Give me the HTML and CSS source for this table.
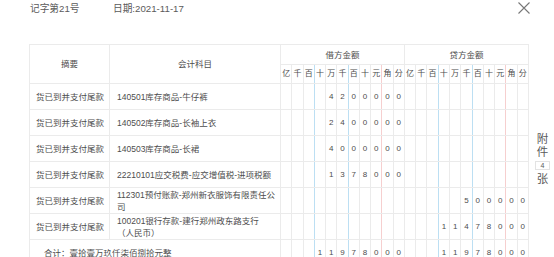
FILE: index.html
```html
<!DOCTYPE html>
<html lang="zh">
<head>
<meta charset="utf-8">
<title>记账凭证</title>
<link rel="stylesheet" href="styles.css">
</head>
<body>
<div class="top">
  <span class="no">记字第21号</span>
  <span class="date">日期:2021-11-17</span>
  <svg class="close" viewBox="0 0 12 12" width="12" height="12"><path d="M0.5 0.5L11.5 11.5M11.5 0.5L0.5 11.5" stroke="#777" stroke-width="1.1" fill="none"/></svg>
</div>
<div class="main">
<table class="voucher">
  <colgroup><col class="c1"><col class="c2"></colgroup>
  <thead>
    <tr class="h1">
      <th rowspan="2">摘要</th>
      <th rowspan="2">会计科目</th>
      <th colspan="11">借方金额</th>
      <th colspan="11">贷方金额</th>
    </tr>
    <tr class="h2">
      <th class="d">亿</th><th class="d">千</th><th class="d b">百</th><th class="d">十</th><th class="d">万</th><th class="d b">千</th><th class="d">百</th><th class="d">十</th><th class="d r">元</th><th class="d">角</th><th class="d">分</th>
      <th class="d">亿</th><th class="d">千</th><th class="d b">百</th><th class="d">十</th><th class="d">万</th><th class="d b">千</th><th class="d">百</th><th class="d">十</th><th class="d r">元</th><th class="d">角</th><th class="d">分</th>
    </tr>
  </thead>
  <tbody>
    <tr class="row">
      <td class="sum">货已到并支付尾款</td>
      <td class="subj">140501库存商品-牛仔裤</td>
      <td class="d"></td><td class="d"></td><td class="d b"></td><td class="d"></td><td class="d">4</td><td class="d b">2</td><td class="d">0</td><td class="d">0</td><td class="d r">0</td><td class="d">0</td><td class="d">0</td>
      <td class="d"></td><td class="d"></td><td class="d b"></td><td class="d"></td><td class="d"></td><td class="d b"></td><td class="d"></td><td class="d"></td><td class="d r"></td><td class="d"></td><td class="d"></td>
    </tr>
    <tr class="row">
      <td class="sum">货已到并支付尾款</td>
      <td class="subj">140502库存商品-长袖上衣</td>
      <td class="d"></td><td class="d"></td><td class="d b"></td><td class="d"></td><td class="d">2</td><td class="d b">4</td><td class="d">0</td><td class="d">0</td><td class="d r">0</td><td class="d">0</td><td class="d">0</td>
      <td class="d"></td><td class="d"></td><td class="d b"></td><td class="d"></td><td class="d"></td><td class="d b"></td><td class="d"></td><td class="d"></td><td class="d r"></td><td class="d"></td><td class="d"></td>
    </tr>
    <tr class="row">
      <td class="sum">货已到并支付尾款</td>
      <td class="subj">140503库存商品-长裙</td>
      <td class="d"></td><td class="d"></td><td class="d b"></td><td class="d"></td><td class="d">4</td><td class="d b">0</td><td class="d">0</td><td class="d">0</td><td class="d r">0</td><td class="d">0</td><td class="d">0</td>
      <td class="d"></td><td class="d"></td><td class="d b"></td><td class="d"></td><td class="d"></td><td class="d b"></td><td class="d"></td><td class="d"></td><td class="d r"></td><td class="d"></td><td class="d"></td>
    </tr>
    <tr class="row">
      <td class="sum">货已到并支付尾款</td>
      <td class="subj">22210101应交税费-应交增值税-进项税额</td>
      <td class="d"></td><td class="d"></td><td class="d b"></td><td class="d"></td><td class="d">1</td><td class="d b">3</td><td class="d">7</td><td class="d">8</td><td class="d r">0</td><td class="d">0</td><td class="d">0</td>
      <td class="d"></td><td class="d"></td><td class="d b"></td><td class="d"></td><td class="d"></td><td class="d b"></td><td class="d"></td><td class="d"></td><td class="d r"></td><td class="d"></td><td class="d"></td>
    </tr>
    <tr class="row">
      <td class="sum">货已到并支付尾款</td>
      <td class="subj">112301预付账款-郑州新衣服饰有限责任公司</td>
      <td class="d"></td><td class="d"></td><td class="d b"></td><td class="d"></td><td class="d"></td><td class="d b"></td><td class="d"></td><td class="d"></td><td class="d r"></td><td class="d"></td><td class="d"></td>
      <td class="d"></td><td class="d"></td><td class="d b"></td><td class="d"></td><td class="d"></td><td class="d b">5</td><td class="d">0</td><td class="d">0</td><td class="d r">0</td><td class="d">0</td><td class="d">0</td>
    </tr>
    <tr class="row">
      <td class="sum">货已到并支付尾款</td>
      <td class="subj">100201银行存款-建行郑州政东路支行<br>（人民币）</td>
      <td class="d"></td><td class="d"></td><td class="d b"></td><td class="d"></td><td class="d"></td><td class="d b"></td><td class="d"></td><td class="d"></td><td class="d r"></td><td class="d"></td><td class="d"></td>
      <td class="d"></td><td class="d"></td><td class="d b"></td><td class="d">1</td><td class="d">1</td><td class="d b">4</td><td class="d">7</td><td class="d">8</td><td class="d r">0</td><td class="d">0</td><td class="d">0</td>
    </tr>
    <tr class="row total">
      <td class="tot" colspan="2">合计：壹拾壹万玖仟柒佰捌拾元整</td>
      <td class="d"></td><td class="d"></td><td class="d b"></td><td class="d">1</td><td class="d">1</td><td class="d b">9</td><td class="d">7</td><td class="d">8</td><td class="d r">0</td><td class="d">0</td><td class="d">0</td>
      <td class="d"></td><td class="d"></td><td class="d b"></td><td class="d">1</td><td class="d">1</td><td class="d b">9</td><td class="d">7</td><td class="d">8</td><td class="d r">0</td><td class="d">0</td><td class="d">0</td>
    </tr>
  </tbody>
</table>
<div class="side">
  <span>附</span>
  <span>件</span>
  <span class="cnt">4</span>
  <span>张</span>
</div>
</div>
</body>
</html>
```
FILE: styles.css
```css
html, body {
  margin: 0;
  background: #fff;
}
body {
  font-family: "Liberation Sans", "Noto Sans CJK SC", sans-serif;
  color: #4d4d4d;
}
.top {
  display: flex;
  align-items: center;
  height: 15px;
  padding: 0 24px 0 30px;
  font-size: 9.7px;
  color: #5a5a5a;
}
.top .no {
  width: 83px;
}
.close {
  margin-left: auto;
  display: block;
}
.main {
  display: flex;
  align-items: center;
  margin-top: 29px;
  padding-left: 29px;
}
.voucher {
  width: 500px;
  flex: none;
  table-layout: fixed;
  border-collapse: collapse;
  font-size: 8.5px;
  line-height: 12px;
}
.voucher th,
.voucher td {
  border: 1px solid #ebebeb;
  padding: 0;
  font-weight: normal;
  text-align: center;
  vertical-align: middle;
}
.voucher col.c1 { width: 80px; }
.voucher col.c2 { width: 171px; }
.voucher .h1 { height: 20px; }
.voucher .h2 { height: 19px; }
.voucher .row { height: 26px; }
.voucher td.sum {
  text-align: left;
  padding-left: 6px;
}
.voucher td.subj {
  text-align: left;
  padding-left: 7px;
  padding-right: 2px;
}
.voucher td.tot {
  text-align: left;
  padding-left: 14px;
}
.voucher .d {
  font-size: 8px;
}
.voucher .b { border-right: 1px solid #bcdff3; }
.voucher .r { border-right: 1px solid #f6cfcf; }
.side {
  margin-left: 6px;
  margin-top: 8px;
  width: 15px;
  display: flex;
  flex-direction: column;
  align-items: center;
  font-size: 11.5px;
  line-height: 13px;
  color: #5a5a5a;
}
.side .cnt {
  box-sizing: border-box;
  width: 15px;
  height: 9px;
  margin: 2px 0 3px;
  border: 1px solid #e3e3e3;
  font-size: 7px;
  line-height: 7px;
  text-align: center;
}
```
